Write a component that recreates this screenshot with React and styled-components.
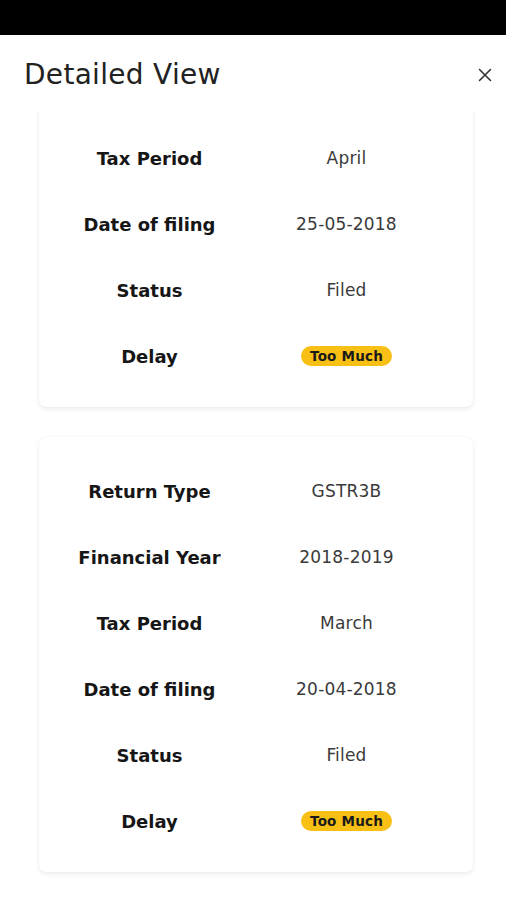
import React, { useLayoutEffect, useRef } from "react";
import styled, { createGlobalStyle } from "styled-components";

const Global = createGlobalStyle`
  html, body { margin: 0; padding: 0; background: #fff; }
  body { font-family: "DejaVu Sans", "Noto Sans", sans-serif; }
  * { box-sizing: border-box; }
`;

const Screen = styled.div`
  width: 506px;
  height: 900px;
  display: flex;
  flex-direction: column;
  background: #fff;
  overflow: hidden;
`;

const StatusBar = styled.div`
  height: 35px;
  background: #000;
  flex: none;
`;

const Header = styled.div`
  height: 77px;
  flex: none;
  display: flex;
  align-items: center;
  justify-content: space-between;
  padding: 0 10px 0 24px;
  background: #fff;
  position: relative;
  z-index: 1;
`;

const Title = styled.h1`
  margin: 2px 0 0;
  font-family: "DejaVu Sans", sans-serif;
  font-weight: 400;
  font-size: 28px;
  letter-spacing: 0.3px;
  color: #222;
`;

const CloseButton = styled.button`
  border: 0;
  background: none;
  padding: 4px;
  margin-top: 2px;
  display: flex;
  align-items: center;
  justify-content: center;
  cursor: pointer;
`;

const List = styled.div`
  flex: 1;
  overflow-y: auto;
  scrollbar-width: none;
  &::-webkit-scrollbar { display: none; }
  display: flex;
  flex-direction: column;
  gap: 30px;
  padding: 30px 33px 40px 39px;
`;

const Card = styled.div`
  background: #fff;
  border-radius: 7px;
  box-shadow: 0 2px 5px rgba(0, 0, 0, 0.08), 0 0 2px rgba(0, 0, 0, 0.05);
  padding: 21px 0 18px 12px;
  display: grid;
  grid-template-columns: 197px 197px;
  grid-auto-rows: 66px;
  flex: none;
`;

const Label = styled.div`
  display: flex;
  align-items: center;
  justify-content: center;
  font-family: "DejaVu Sans", sans-serif;
  font-weight: 700;
  font-size: 18px;
  color: #161616;
`;

const Value = styled.div`
  display: flex;
  align-items: center;
  justify-content: center;
  font-family: "DejaVu Sans", sans-serif;
  font-weight: 400;
  font-size: 17px;
  color: #3a3a3a;
  letter-spacing: 0.2px;
`;

const Badge = styled.span`
  display: inline-flex;
  align-items: center;
  height: 20px;
  padding: 0 9px;
  border-radius: 10px;
  background: #f8bf14;
  color: #1a1a1a;
  font-family: "DejaVu Sans", sans-serif;
  font-weight: 700;
  font-size: 13.5px;
`;

const records = [
  { returnType: "GSTR3B", year: "2018-2019", period: "April", date: "25-05-2018", status: "Filed", delay: "Too Much" },
  { returnType: "GSTR3B", year: "2018-2019", period: "March", date: "20-04-2018", status: "Filed", delay: "Too Much" },
];

function Record({ r }) {
  const rows = [
    ["Return Type", r.returnType],
    ["Financial Year", r.year],
    ["Tax Period", r.period],
    ["Date of filing", r.date],
    ["Status", r.status],
  ];
  return (
    <Card>
      {rows.map(([k, v]) => (
        <React.Fragment key={k}>
          <Label>{k}</Label>
          <Value>{v}</Value>
        </React.Fragment>
      ))}
      <Label>Delay</Label>
      <Value>
        <Badge>{r.delay}</Badge>
      </Value>
    </Card>
  );
}

export default function App() {
  const listRef = useRef(null);
  useLayoutEffect(() => {
    if (listRef.current) listRef.current.scrollTop = 170;
  }, []);
  return (
    <Screen>
      <Global />
      <StatusBar />
      <Header>
        <Title>Detailed View</Title>
        <CloseButton aria-label="Close">
          <svg width="14" height="14" viewBox="0 0 14 14">
            <path d="M1.5 1.5 L12.5 12.5 M12.5 1.5 L1.5 12.5" stroke="#333" strokeWidth="1.6" strokeLinecap="round" />
          </svg>
        </CloseButton>
      </Header>
      <List ref={listRef}>
        {records.map((r, i) => (
          <Record key={i} r={r} />
        ))}
      </List>
    </Screen>
  );
}
